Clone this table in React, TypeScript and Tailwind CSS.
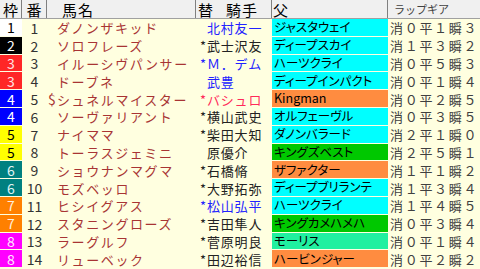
import React from "react";

type Row = {
  waku: number;
  ban: number;
  mark: string;
  name: string;
  jmark: string;
  jockey: string;
  jc: string;
  sire: string;
  sc: string;
  lap: string;
};

const wakuColor: Record<number, string> = {
  1: "bg-white text-black",
  2: "bg-black text-white",
  3: "bg-[#ff2626] text-[#ffe4e4]",
  4: "bg-[#0000ff] text-white",
  5: "bg-[#ffff00] text-black",
  6: "bg-[#008080] text-[#e0f4f4]",
  7: "bg-[#ff8000] text-[#ffeedd]",
  8: "bg-[#ff00ff] text-[#ffe6ff]",
};

const BLUE = "text-[#2222ff]";
const BLACK = "text-[#222222]";
const RED = "text-[#ff2a5a]";

const CYAN = "bg-[#00ffff]";
const ORANGE = "bg-[#ff8c40]";
const GREEN = "bg-[#00c800]";
const MINT = "bg-[#20f0a0]";

const rows: Row[] = [
  { waku: 1, ban: 1, mark: "", name: "ダノンザキッド", jmark: "", jockey: "北村友一", jc: BLUE, sire: "ジャスタウェイ", sc: CYAN, lap: "消０平１瞬３" },
  { waku: 2, ban: 2, mark: "", name: "ソロフレーズ", jmark: "*", jockey: "武士沢友", jc: BLACK, sire: "ディープスカイ", sc: CYAN, lap: "消１平３瞬２" },
  { waku: 3, ban: 3, mark: "", name: "イルーシヴパンサー", jmark: "*", jockey: "Ｍ．デム", jc: BLUE, sire: "ハーツクライ", sc: CYAN, lap: "消０平５瞬３" },
  { waku: 3, ban: 4, mark: "", name: "ドーブネ", jmark: "", jockey: "武豊", jc: BLUE, sire: "ディープインパクト", sc: CYAN, lap: "消０平１瞬４" },
  { waku: 4, ban: 5, mark: "$", name: "シュネルマイスター", jmark: "*", jockey: "バシュロ", jc: RED, sire: "Kingman", sc: ORANGE, lap: "消０平２瞬５" },
  { waku: 4, ban: 6, mark: "", name: "ソーヴァリアント", jmark: "*", jockey: "横山武史", jc: BLACK, sire: "オルフェーヴル", sc: CYAN, lap: "消０平３瞬５" },
  { waku: 5, ban: 7, mark: "", name: "ナイママ", jmark: "*", jockey: "柴田大知", jc: BLACK, sire: "ダノンバラード", sc: CYAN, lap: "消２平１瞬０" },
  { waku: 5, ban: 8, mark: "", name: "トーラスジェミニ", jmark: "", jockey: "原優介", jc: BLACK, sire: "キングズベスト", sc: GREEN, lap: "消２平５瞬１" },
  { waku: 6, ban: 9, mark: "", name: "ショウナンマグマ", jmark: "*", jockey: "石橋脩", jc: BLACK, sire: "ザファクター", sc: ORANGE, lap: "消１平１瞬２" },
  { waku: 6, ban: 10, mark: "", name: "モズベッロ", jmark: "*", jockey: "大野拓弥", jc: BLACK, sire: "ディープブリランテ", sc: CYAN, lap: "消１平３瞬４" },
  { waku: 7, ban: 11, mark: "", name: "ヒシイグアス", jmark: "*", jockey: "松山弘平", jc: BLUE, sire: "ハーツクライ", sc: CYAN, lap: "消１平４瞬５" },
  { waku: 7, ban: 12, mark: "", name: "スタニングローズ", jmark: "*", jockey: "吉田隼人", jc: BLACK, sire: "キングカメハメハ", sc: GREEN, lap: "消０平３瞬４" },
  { waku: 8, ban: 13, mark: "", name: "ラーグルフ", jmark: "*", jockey: "菅原明良", jc: BLACK, sire: "モーリス", sc: MINT, lap: "消０平１瞬４" },
  { waku: 8, ban: 14, mark: "", name: "リューベック", jmark: "*", jockey: "田辺裕信", jc: BLACK, sire: "ハービンジャー", sc: ORANGE, lap: "消０平２瞬２" },
];

const font = "font-['Noto_Sans_CJK_JP','Noto_Sans',sans-serif]";
const cols = "grid grid-cols-[22px_25px_149px_76px_116px_92px]";

export default function App() {
  return (
    <div className={`w-[480px] h-[269px] overflow-hidden bg-[#ffffe0] ${font} leading-none`}>
      {/* header */}
      <div className={`${cols} h-[19px] bg-[#f0f0f0] border-b border-[#a0a0a0] text-black text-[15px]`}>
        <div className="flex items-center justify-center border-r border-[#808080]">枠</div>
        <div className="flex items-center justify-center border-r border-[#808080]">番</div>
        <div className="flex items-center pl-[15px] tracking-[1px] border-r border-[#808080]">馬名</div>
        <div className="flex items-center pl-[2px] tracking-[1px] border-r border-[#808080]">
          <span>替</span>
          <span className="ml-[12px]">騎手</span>
        </div>
        <div className="flex items-center pl-[1px] border-r border-[#808080]">父</div>
        <div className="flex items-center pl-[6px] text-[11px] text-[#404040]">ラップギア</div>
      </div>

      {/* body */}
      {rows.map((r) => (
        <div key={r.ban} className={`${cols} h-[17.8px]`}>
          <div className={`h-[calc(100%-1px)] flex items-center justify-center text-[14px] ${wakuColor[r.waku]}`}>
            {r.waku}
          </div>
          <div className="flex items-center justify-center text-[14px] text-[#333333]">{r.ban}</div>
          <div className="flex items-center text-[13px] text-[#a83434]">
            <span className="w-[10px] pl-[1px] text-[14px]">{r.mark}</span>
            <span className="tracking-[1.6px] whitespace-nowrap">{r.name}</span>
          </div>
          <div className={`flex items-center text-[13px] whitespace-nowrap ${r.jc}`}>
            <span className="w-[11px] pl-[4px]">{r.jmark}</span>
            <span className="tracking-[0.8px]">{r.jockey}</span>
          </div>
          <div className={`h-[calc(100%-1px)] flex items-center pl-[2px] text-[12.5px] text-black whitespace-nowrap [font-feature-settings:'palt'] ${r.sc}`}>
            {r.sire}
          </div>
          <div className="flex items-center pl-[2px] text-[13px] text-[#404040] tracking-[1.7px] whitespace-nowrap">
            {r.lap}
          </div>
        </div>
      ))}
    </div>
  );
}
